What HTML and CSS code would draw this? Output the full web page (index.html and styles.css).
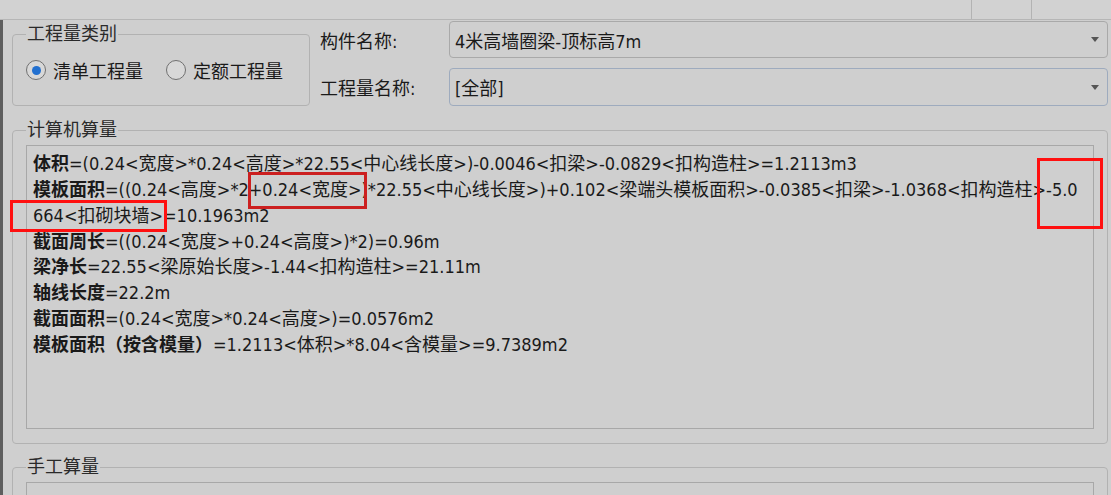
FILE: index.html
```html
<!DOCTYPE html>
<html lang="zh-CN">
<head>
  <meta charset="UTF-8">
  <title>工程量</title>
  <link rel="stylesheet" href="styles.css">
</head>
<body>
  <div class="topbar">
    <div class="topbar-fill"></div>
    <div class="topbar-cell"></div>
    <div class="topbar-cell wide"></div>
  </div>
  <div class="main">
    <div class="edge"></div>
    <div class="content">
      <div class="top-row">
        <fieldset class="group kind">
          <legend>工程量类别</legend>
          <label class="radio checked"><span class="dot"></span>清单工程量</label>
          <label class="radio"><span class="dot"></span>定额工程量</label>
        </fieldset>
        <div class="fields">
          <div class="field">
            <span class="field-label">构件名称:</span>
            <div class="combo">4米高墙圈梁-顶标高7m<span class="arrow"></span></div>
          </div>
          <div class="field">
            <span class="field-label">工程量名称:</span>
            <div class="combo focus">[全部]<span class="arrow"></span></div>
          </div>
        </div>
      </div>

      <fieldset class="group calc">
        <legend>计算机算量</legend>
        <div class="textbox">
          <div class="line"><b>体积</b>=(0.24&lt;宽度&gt;*0.24&lt;高度&gt;*22.55&lt;中心线长度&gt;)-0.0046&lt;扣梁&gt;-0.0829&lt;扣构造柱&gt;=1.2113m3</div>
          <div class="line"><b>模板面积</b>=((0.24&lt;高度&gt;*2+0.24&lt;宽度&gt;)*22.55&lt;中心线长度&gt;)+0.102&lt;梁端头模板面积&gt;-0.0385&lt;扣梁&gt;-1.0368&lt;扣构造柱&gt;-5.0</div>
          <div class="line">664&lt;扣砌块墙&gt;=10.1963m2</div>
          <div class="line"><b>截面周长</b>=((0.24&lt;宽度&gt;+0.24&lt;高度&gt;)*2)=0.96m</div>
          <div class="line"><b>梁净长</b>=22.55&lt;梁原始长度&gt;-1.44&lt;扣构造柱&gt;=21.11m</div>
          <div class="line"><b>轴线长度</b>=22.2m</div>
          <div class="line"><b>截面面积</b>=(0.24&lt;宽度&gt;*0.24&lt;高度&gt;)=0.0576m2</div>
          <div class="line"><b>模板面积（按含模量）</b>=1.2113&lt;体积&gt;*8.04&lt;含模量&gt;=9.7389m2</div>
        </div>
      </fieldset>

      <fieldset class="group manual">
        <legend>手工算量</legend>
        <div class="textbox"></div>
      </fieldset>
    </div>
  </div>

  <!-- annotation boxes drawn over the screenshot -->
  <div class="mark mark-a"></div>
  <div class="mark mark-b"></div>
  <div class="mark mark-c"></div>
</body>
</html>
```

FILE: styles.css
```css
* { box-sizing: border-box; }
body {
  margin: 0;
  width: 1111px;
  height: 495px;
  overflow: hidden;
  position: relative;
  background: #cfcfcf;
  font-family: "DejaVu Sans Condensed", "Noto Sans CJK SC", sans-serif;
  font-size: 18px;
  color: #1a1a1a;
}
.topbar {
  height: 20px;
  display: flex;
  background: #d2d2d2;
  border-bottom: 1px solid #b6b6b6;
}
.topbar-fill { flex: 1; }
.topbar-cell {
  width: 60px;
  border-left: 1px solid #b3b3b3;
}
.topbar-cell.wide { width: 80px; }
.main {
  display: flex;
  height: 475px;
  overflow: hidden;
}
.edge {
  width: 3px;
  background: #5e5e5e;
}
.content {
  flex: 1;
  padding: 1px 3px 0 9px;
}
.top-row {
  display: flex;
  align-items: flex-end;
  gap: 10px;
}
.group {
  margin: 0;
  border: 1px solid #b2b2b2;
  border-radius: 4px;
  padding: 0 13px;
  min-width: 0;
}
.group legend {
  padding: 0 1px;
  line-height: 20px;
  color: #2a2a2a;
}
.kind {
  width: 298px;
  height: 82px;
  display: flex;
  align-items: center;
  gap: 23px;
  padding-bottom: 9px;
}
.radio {
  display: flex;
  align-items: center;
  gap: 7px;
}
.dot {
  width: 20px;
  height: 20px;
  border-radius: 50%;
  border: 1.5px solid #707070;
  background: #d8d8d8;
  display: flex;
  align-items: center;
  justify-content: center;
}
.radio.checked .dot::after {
  content: "";
  width: 9px;
  height: 9px;
  border-radius: 50%;
  background: #2270d0;
}
.fields {
  flex: 1;
  display: flex;
  flex-direction: column;
  gap: 10px;
}
.field {
  display: flex;
  align-items: center;
}
.field-label { width: 129px; }
.combo {
  flex: 1;
  height: 37px;
  display: flex;
  align-items: center;
  padding: 0 5px;
  border: 1px solid #a9a9a9;
  border-radius: 4px;
}
.combo.focus {
  height: 38px;
  border-color: #9eabbe;
}
.arrow {
  margin-left: auto;
  margin-right: 3px;
  border: 4px solid transparent;
  border-top: 5px solid #555;
  border-bottom: 0;
}
.calc {
  margin-top: 14px;
  height: 324px;
  padding-top: 5px;
}
.textbox {
  height: 284px;
  border: 1px solid #a8a8a8;
  padding: 5px 6px;
}
.line {
  line-height: 25.85px;
  white-space: nowrap;
}
.line b { font-weight: 700; }
.manual {
  margin-top: 13px;
  height: 60px;
  padding-top: 5px;
}
.manual .textbox { height: 40px; }
.mark {
  position: absolute;
  border: 3px solid #ff1010;
}
.mark-a {
  left: 248px;
  top: 172px;
  width: 119px;
  height: 37px;
  border-color: #cc2020;
}
.mark-b {
  left: 10px;
  top: 200px;
  width: 157px;
  height: 32px;
}
.mark-c {
  left: 1037px;
  top: 158px;
  width: 66px;
  height: 71px;
}
```
